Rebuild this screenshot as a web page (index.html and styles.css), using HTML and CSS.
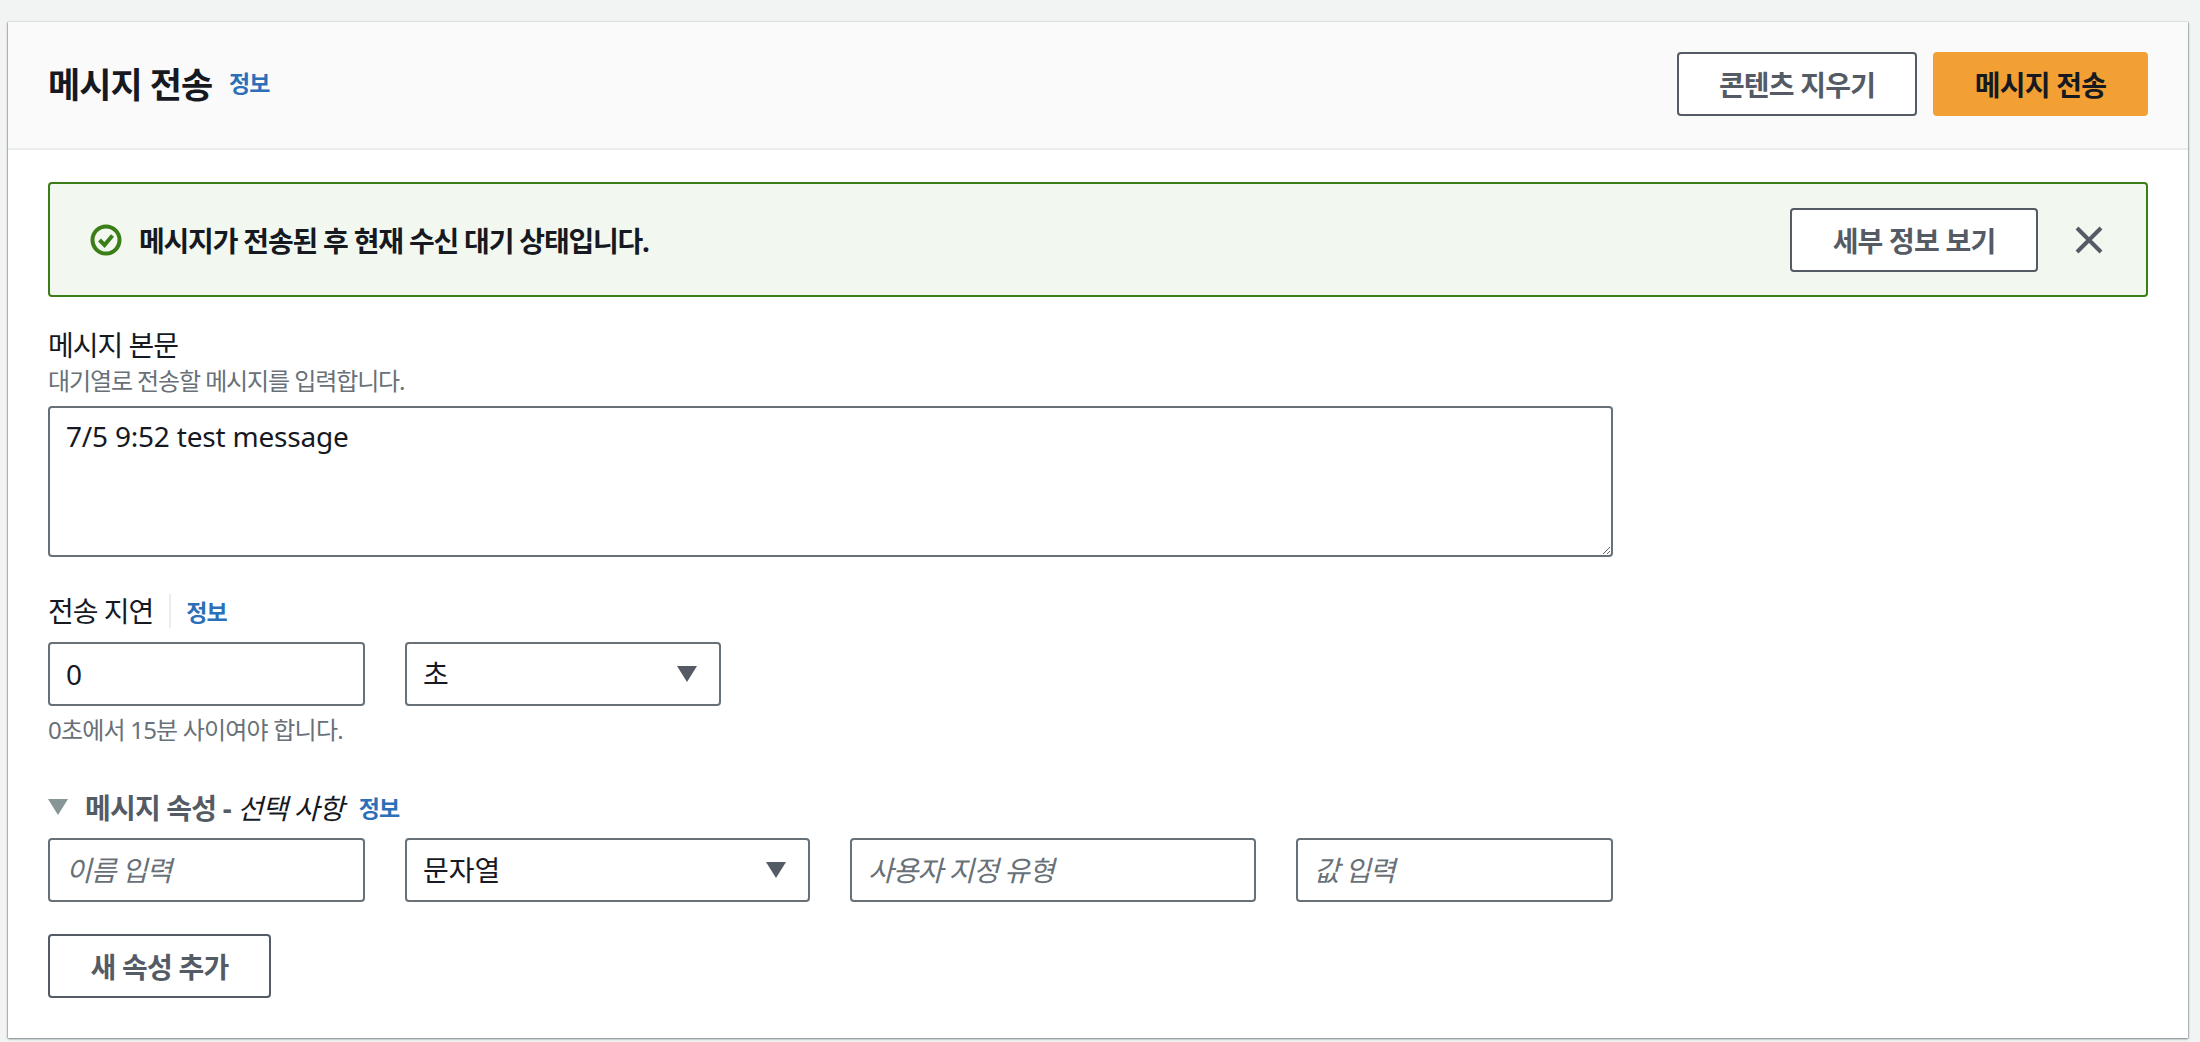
FILE: index.html

```html
<!DOCTYPE html>
<html lang="ko">
<head>
  <meta charset="UTF-8" />
  <title>메시지 전송</title>
  <link rel="stylesheet" href="styles.css">
</head>
<body>

  <section class="card">
    <header class="card-head">
      <div class="head-title">
        <h2>메시지 전송</h2>
        <a class="info" href="#">정보</a>
      </div>
      <div class="head-actions">
        <button class="btn btn-clear">콘텐츠 지우기</button>
        <button class="btn btn-primary">메시지 전송</button>
      </div>
    </header>

    <div class="card-body">
      <div class="alert">
        <svg class="alert-icon" viewBox="0 0 32 32" width="32" height="32">
          <circle cx="16" cy="16" r="13.5" fill="none" stroke="#3b7d17" stroke-width="4"/>
          <path d="M9.5 16l5 5 8-9.5" fill="none" stroke="#3b7d17" stroke-width="4"/>
        </svg>
        <span class="alert-text">메시지가 전송된 후 현재 수신 대기 상태입니다.</span>
        <button class="btn btn-details">세부 정보 보기</button>
        <svg class="alert-close" viewBox="0 0 28 28" width="28" height="28">
          <path d="M2 2l24 24M26 2L2 26" fill="none" stroke="#545b64" stroke-width="4"/>
        </svg>
      </div>

      <label class="label">메시지 본문</label>
      <div class="desc">대기열로 전송할 메시지를 입력합니다.</div>
      <textarea class="field message">7/5 9:52 test message</textarea>

      <div class="label-row">
        <label class="label">전송 지연</label>
        <span class="divider"></span>
        <a class="info" href="#">정보</a>
      </div>
      <div class="row">
        <input class="field w-name" type="text" value="0">
        <div class="select-wrap w-unit">
          <select class="field"><option>초</option></select>
          <svg class="caret" viewBox="0 0 20 16" width="20" height="16"><path d="M0 0h20L10 16z" fill="#545b64"/></svg>
        </div>
      </div>
      <div class="desc hint">0초에서 15분 사이여야 합니다.</div>

      <div class="expander">
        <svg viewBox="0 0 20 16" width="20" height="16"><path d="M0 0h20L10 16z" fill="#879596"/></svg>
        <span class="expander-title">메시지 속성 - <i>선택 사항</i></span>
        <a class="info" href="#">정보</a>
      </div>
      <div class="row">
        <input class="field w-name" type="text" placeholder="이름 입력">
        <div class="select-wrap w-type">
          <select class="field"><option>문자열</option></select>
          <svg class="caret" viewBox="0 0 20 16" width="20" height="16"><path d="M0 0h20L10 16z" fill="#545b64"/></svg>
        </div>
        <input class="field w-custom" type="text" placeholder="사용자 지정 유형">
        <input class="field w-value" type="text" placeholder="값 입력">
      </div>

      <button class="btn btn-add">새 속성 추가</button>
    </div>
  </section>

</body>
</html>
```

FILE: styles.css

```css
* {
  box-sizing: border-box;
}

body {
  margin: 0;
  padding: 22px 12px 4px 8px;
  height: 1042px;
  overflow: hidden;
  background-color: #f2f3f3;
  font-family: "Noto Sans", "Noto Sans CJK KR", sans-serif;
  color: #16191f;
}

.card {
  height: 1016px;
  background-color: #fff;
  box-shadow: 0 1px 2px 0 rgba(0, 28, 36, 0.5), 1px 0 1px 0 rgba(0, 28, 36, 0.15), -1px 0 1px 0 rgba(0, 28, 36, 0.15);
}

.card-head {
  display: flex;
  justify-content: space-between;
  align-items: center;
  height: 128px;
  padding: 0 40px 2px;
  background-color: #fafafa;
  border-bottom: 2px solid #eaeded;
}

.head-title {
  display: flex;
  align-items: center;
  gap: 17px;
  margin-bottom: 4px;
}

.head-title h2 {
  margin: 0;
  font-size: 35px;
  font-weight: 700;
  letter-spacing: -1px;
}

.head-actions {
  display: flex;
  gap: 16px;
}

.info {
  color: #2a6fb8;
  font-size: 23px;
  font-weight: 700;
  letter-spacing: -1px;
  text-decoration: none;
}

.btn {
  height: 64px;
  border: 2px solid #545b64;
  border-radius: 4px;
  background-color: #fff;
  color: #545b64;
  font-family: inherit;
  font-size: 28px;
  font-weight: 700;
  letter-spacing: -0.8px;
}

.btn-clear {
  width: 240px;
}

.btn-primary {
  width: 215px;
  background-color: #f2a033;
  border-color: #f2a033;
  color: #16191f;
}

.card-body {
  padding: 32px 40px 0;
}

.alert {
  display: flex;
  align-items: center;
  height: 115px;
  padding: 0 43px 0 40px;
  margin-bottom: 30px;
  border: 2px solid #3b7d17;
  border-radius: 4px;
  background-color: #f2f8f0;
}

.alert-text {
  flex: 1;
  margin-left: 17px;
  font-size: 28px;
  font-weight: 700;
  letter-spacing: -1.2px;
}

.btn-details {
  width: 248px;
  margin-right: 37px;
}

.label {
  display: block;
  font-size: 28px;
  line-height: 36px;
  letter-spacing: -1px;
}

.desc {
  margin-top: 2px;
  font-size: 24px;
  line-height: 32px;
  letter-spacing: -1.1px;
  color: #687078;
}

.field {
  display: block;
  width: 100%;
  height: 64px;
  padding: 0 16px;
  border: 2px solid #687078;
  border-radius: 4px;
  background-color: #fff;
  color: #16191f;
  font-family: inherit;
  font-size: 28px;
}

.field::placeholder {
  color: #687078;
  font-style: italic;
  letter-spacing: -1px;
}

.message {
  width: 1565px;
  height: 151px;
  margin-top: 9px;
  padding: 9px 16px;
  letter-spacing: -0.2px;
}

.label-row {
  display: flex;
  align-items: center;
  height: 34px;
  margin-top: 37px;
  margin-bottom: 14px;
}

.divider {
  width: 2px;
  height: 34px;
  margin: 0 15px 0 16px;
  background-color: #eaeded;
}

.row {
  display: flex;
  gap: 40px;
}

.w-name {
  width: 317px;
}

.w-unit {
  width: 316px;
}

.w-type {
  width: 405px;
}

.w-custom {
  width: 406px;
}

.w-value {
  width: 317px;
}

.select-wrap {
  position: relative;
}

.select-wrap select {
  appearance: none;
}

.caret {
  position: absolute;
  top: 24px;
  right: 24px;
}

.hint {
  margin-top: 8px;
  letter-spacing: -0.8px;
}

.expander {
  display: flex;
  align-items: center;
  height: 34px;
  margin-top: 44px;
  margin-bottom: 14px;
}

.expander-title {
  margin: 0 15px 0 17px;
  font-size: 28px;
  font-weight: 700;
  letter-spacing: -0.8px;
  color: #545b64;
}

.expander-title i {
  font-weight: 400;
  color: #16191f;
}

.btn-add {
  display: block;
  width: 223px;
  margin-top: 32px;
}
```
